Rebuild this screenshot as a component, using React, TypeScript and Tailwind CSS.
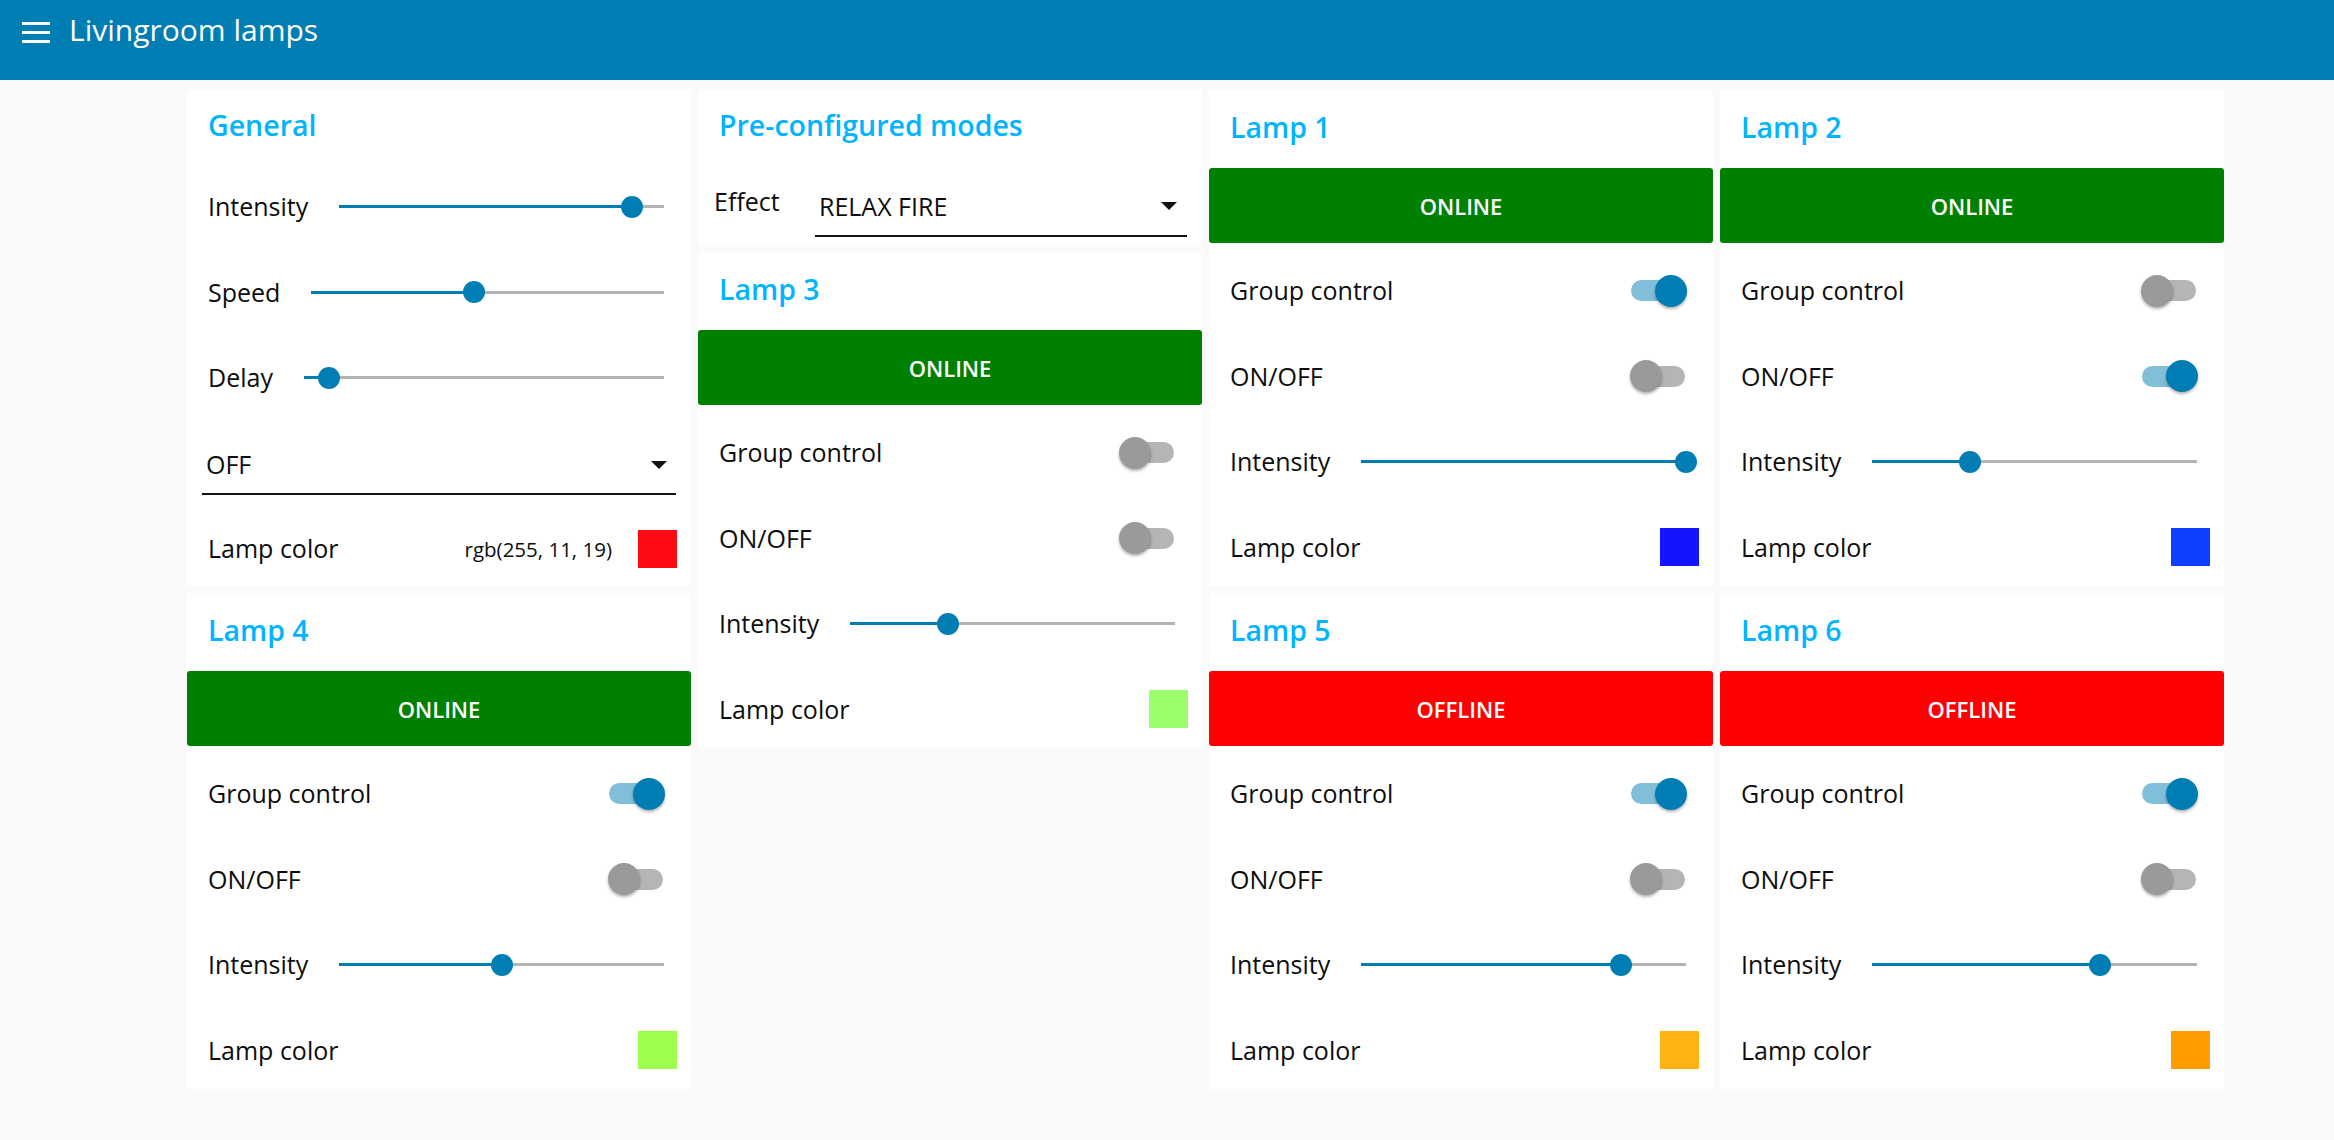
import React from 'react';

type Lamp = {
    name: string;
    online: boolean;
    group: boolean;
    on: boolean;
    intensity: number;
    color: string;
};

const lamps: Lamp[] = [
    { name: 'Lamp 1', online: true, group: true, on: false, intensity: 100, color: '#1414ff' },
    { name: 'Lamp 2', online: true, group: false, on: true, intensity: 30, color: '#1040ff' },
    { name: 'Lamp 3', online: true, group: false, on: false, intensity: 30, color: '#9aff6b' },
    { name: 'Lamp 4', online: true, group: true, on: false, intensity: 50, color: '#9fff4f' },
    { name: 'Lamp 5', online: false, group: true, on: false, intensity: 80, color: '#ffb414' },
    { name: 'Lamp 6', online: false, group: true, on: false, intensity: 70, color: '#ff9c00' },
];

const Card = ({ children, className = '' }: { children: React.ReactNode; className?: string }) => (
    <div className={`flex flex-col overflow-hidden bg-white ${className}`}>{children}</div>
);

const Title = ({ text, className = '' }: { text: string; className?: string }) => (
    <div className={`flex shrink-0 items-center pl-[21px] pb-[4px] ${className}`}>
        <span className="text-[28.5px] font-semibold leading-none text-[#00b4ff]">{text}</span>
    </div>
);

const Label = ({ text }: { text: string }) => (
    <span className="text-[25px] leading-none text-[#0d0d0d] whitespace-nowrap">{text}</span>
);

const Slider = ({ value }: { value: number }) => (
    <div className="relative flex-1 h-[3px] bg-[#b4b4b4]">
        <div className="absolute left-0 top-0 h-full bg-[#007db3]" style={{ width: `${value}%` }} />
        <div
            className="absolute top-1/2 w-[22px] h-[22px] -translate-x-1/2 -translate-y-1/2 rounded-full bg-[#007db3]"
            style={{ left: `${value}%` }}
        />
    </div>
);

const Toggle = ({ on }: { on: boolean }) => (
    <div className="relative w-[57px] h-[32px]">
        <div className={`absolute left-[1px] top-[5.5px] w-[54px] h-[21px] rounded-full ${on ? 'bg-[#80bed9]' : 'bg-[#b5b5b5]'}`} />
        <div
            className={`absolute top-0 w-[32px] h-[32px] rounded-full shadow-[0_2px_3px_rgba(0,0,0,0.3)] ${on ? 'left-[25px] bg-[#007db3]' : 'left-0 bg-[#9a9a9a]'}`}
        />
    </div>
);

const Arrow = () => (
    <div className="w-0 h-0 border-l-[8px] border-r-[8px] border-t-[8px] border-l-transparent border-r-transparent border-t-[#111]" />
);

const SliderRow = ({ label, value }: { label: string; value: number }) => (
    <div className="flex shrink-0 items-center h-[85.5px] pl-[21px] pr-[27px]">
        <Label text={label} />
        <div className="ml-[31px] flex-1 flex">
            <Slider value={value} />
        </div>
    </div>
);

const ToggleRow = ({ label, on }: { label: string; on: boolean }) => (
    <div className="flex shrink-0 items-center justify-between h-[85.5px] pl-[21px] pr-[26px]">
        <Label text={label} />
        <Toggle on={on} />
    </div>
);

const ColorRow = ({ color, value }: { color: string; value?: string }) => (
    <div className="flex shrink-0 items-center h-[85.5px] pl-[21px] pr-[14px]">
        <Label text="Lamp color" />
        {value && <span className="ml-auto mr-[26px] text-[20.5px] leading-none text-[#0d0d0d]">{value}</span>}
        <div className={`w-[39px] h-[38px] ${value ? '' : 'ml-auto'}`} style={{ backgroundColor: color }} />
    </div>
);

const LampCard = ({ lamp }: { lamp: Lamp }) => (
    <Card className="h-[496px]">
        <Title text={lamp.name} className="h-[78px]" />
        <div
            className={`flex shrink-0 items-center justify-center h-[75px] rounded-[3px] ${lamp.online ? 'bg-[#008000]' : 'bg-[#ff0000]'}`}
        >
            <span className="text-[22px] font-semibold leading-none text-white">{lamp.online ? 'ONLINE' : 'OFFLINE'}</span>
        </div>
        <div className="mt-[5px] shrink-0">
            <ToggleRow label="Group control" on={lamp.group} />
            <ToggleRow label="ON/OFF" on={lamp.on} />
            <SliderRow label="Intensity" value={lamp.intensity} />
            <ColorRow color={lamp.color} />
        </div>
    </Card>
);

const GeneralCard = () => (
    <Card className="h-[496px]">
        <Title text="General" className="h-[74px]" />
        <SliderRow label="Intensity" value={90} />
        <SliderRow label="Speed" value={46} />
        <SliderRow label="Delay" value={7} />
        <div className="shrink-0 h-[85.5px] px-[15px] pt-[16px]">
            <div className="flex items-center justify-between h-[58px] border-b-2 border-[#111] pl-[4px] pr-[9px]">
                <span className="text-[25px] leading-none text-[#0d0d0d]">OFF</span>
                <Arrow />
            </div>
        </div>
        <ColorRow color="#ff0b13" value="rgb(255, 11, 19)" />
    </Card>
);

const ModesCard = () => (
    <Card className="h-[155px]">
        <Title text="Pre-configured modes" className="h-[74px]" />
        <div className="flex shrink-0 items-start h-[80px] pl-[16px] pr-[15px]">
            <span className="mt-[25px] text-[25px] leading-[24px] text-[#0d0d0d]">Effect</span>
            <div className="ml-auto mt-[13px] w-[372px] h-[60px] flex items-center justify-between border-b-2 border-[#111] pl-[4px] pr-[10px]">
                <span className="text-[25px] leading-none text-[#0d0d0d]">RELAX FIRE</span>
                <Arrow />
            </div>
        </div>
    </Card>
);

export default function App() {
    return (
        <div className="min-h-screen bg-[#fafafa] font-['Open_Sans',sans-serif]">
            <header className="flex items-start h-[80px] bg-[#007db3]">
                <div className="flex flex-col justify-center gap-[6px] h-[40px] mt-[12px] ml-[22px]">
                    <div className="w-[28px] h-[3px] bg-white" />
                    <div className="w-[28px] h-[3px] bg-white" />
                    <div className="w-[28px] h-[3px] bg-white" />
                </div>
                <h1 className="ml-[19px] mt-[10px] text-[30px] font-normal leading-[40px] text-white">Livingroom lamps</h1>
            </header>

            <main className="flex gap-[7px] pl-[187px] pt-[10px] pb-[40px]">
                <div className="flex flex-col gap-[7px] w-[504px]">
                    <GeneralCard />
                    <LampCard lamp={lamps[3]} />
                </div>
                <div className="flex flex-col gap-[7px] w-[504px]">
                    <ModesCard />
                    <LampCard lamp={lamps[2]} />
                </div>
                <div className="flex flex-col gap-[7px] w-[504px]">
                    <LampCard lamp={lamps[0]} />
                    <LampCard lamp={lamps[4]} />
                </div>
                <div className="flex flex-col gap-[7px] w-[504px]">
                    <LampCard lamp={lamps[1]} />
                    <LampCard lamp={lamps[5]} />
                </div>
            </main>
        </div>
    );
}
